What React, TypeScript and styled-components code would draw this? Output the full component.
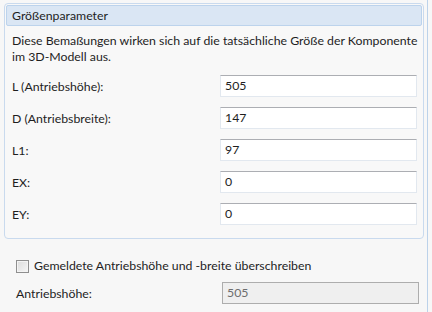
import React from 'react';
import styled, { createGlobalStyle } from 'styled-components';

const GlobalStyle = createGlobalStyle`
  html, body {
    margin: 0;
    padding: 0;
    background: #f7f7f7;
  }
  body {
    font-family: 'Segoe UI', Lato, 'Noto Sans', sans-serif;
    font-size: 12.3px;
    color: #1e1e1e;
  }
`;

const Page = styled.div`
  width: 428px;
  height: 312px;
  border-right: 1px solid #bcd2ea;
  box-sizing: border-box;
  padding: 3px 3px 0 4px;
  overflow: hidden;
`;

const Group = styled.section`
  border: 1px solid #c9daee;
  border-radius: 4px;
  background: #f8f8f8;
  padding: 1px 1px 13px;
`;

const GroupHeader = styled.div`
  height: 19px;
  line-height: 19px;
  background: #dae6f4;
  border: 1px solid #bcd3ec;
  border-radius: 2px;
  padding-left: 5px;
  color: #1e1e1e;
`;

const Description = styled.p`
  margin: 7px 0 0;
  padding: 0 0 0 6px;
  line-height: 16px;
`;

const Rows = styled.div`
  display: flex;
  flex-direction: column;
  row-gap: 10px;
  margin-top: 10px;
`;

const Row = styled.div<{ $indent?: number }>`
  display: flex;
  align-items: center;
  padding-left: ${p => p.$indent ?? 6}px;
`;

const Label = styled.span<{ $width: number }>`
  width: ${p => p.$width}px;
  flex-shrink: 0;
`;

const Field = styled.div<{ $disabled?: boolean; $width: number }>`
  width: ${p => p.$width}px;
  height: 22px;
  box-sizing: border-box;
  border: 1px solid ${p => (p.$disabled ? '#adadad' : '#e2e8ef')};
  border-top-color: ${p => (p.$disabled ? '#adadad' : '#acaeb3')};
  background: ${p => (p.$disabled ? '#efefef' : '#ffffff')};
  color: ${p => (p.$disabled ? '#6d6d6d' : '#1e1e1e')};
  padding-left: 4px;
  line-height: 20px;
`;

const Below = styled.div`
  display: flex;
  flex-direction: column;
  row-gap: 8px;
  margin-top: 19px;
`;

const CheckRow = styled.label`
  display: flex;
  align-items: center;
  column-gap: 5px;
  padding-left: 12px;
  line-height: 16px;
`;

const Box = styled.span`
  width: 11px;
  height: 11px;
  border: 1px solid #8f8f8f;
  background: linear-gradient(135deg, #dcdcdc, #f6f6f6);
  box-shadow: inset 0 0 0 1px #f4f4f4;
`;

const fields = [
  { label: 'L (Antriebshöhe):', value: '505' },
  { label: 'D (Antriebsbreite):', value: '147' },
  { label: 'L1:', value: '97' },
  { label: 'EX:', value: '0' },
  { label: 'EY:', value: '0' },
];

export default function App() {
  return (
    <Page>
      <GlobalStyle />
      <Group>
        <GroupHeader>Größenparameter</GroupHeader>
        <Description>
          Diese Bemaßungen wirken sich auf die tatsächliche Größe der Komponente im 3D-Modell aus.
        </Description>
        <Rows>
          {fields.map(f => (
            <Row key={f.label}>
              <Label $width={208}>{f.label}</Label>
              <Field $width={197}>{f.value}</Field>
            </Row>
          ))}
        </Rows>
      </Group>
      <Below>
        <CheckRow>
          <Box />
          Gemeldete Antriebshöhe und -breite überschreiben
        </CheckRow>
        <Row $indent={12}>
          <Label $width={206}>Antriebshöhe:</Label>
          <Field $disabled $width={197}>505</Field>
        </Row>
      </Below>
    </Page>
  );
}
